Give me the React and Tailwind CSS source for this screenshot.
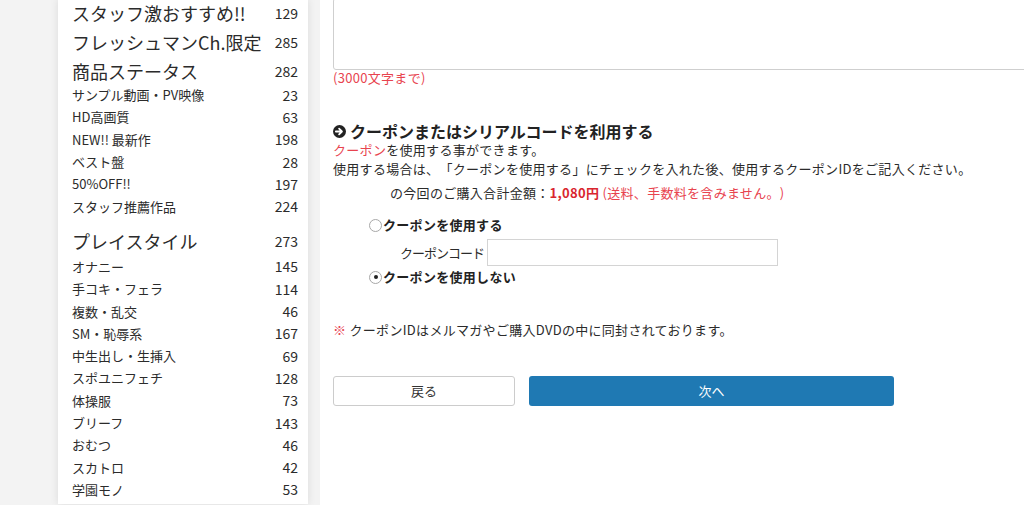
import React from 'react';

const font = { fontFamily: '"Noto Sans CJK JP", "Noto Sans", sans-serif' };

const groups = [
  { type: 'big', label: 'スタッフ激おすすめ!!', count: 129 },
  { type: 'big', label: 'フレッシュマンCh.限定', count: 285 },
  { type: 'big', label: '商品ステータス', count: 282 },
  { type: 'small', label: 'サンプル動画・PV映像', count: 23, first: true },
  { type: 'small', label: 'HD高画質', count: 63 },
  { type: 'small', label: 'NEW!! 最新作', count: 198 },
  { type: 'small', label: 'ベスト盤', count: 28 },
  { type: 'small', label: '50%OFF!!', count: 197 },
  { type: 'small', label: 'スタッフ推薦作品', count: 224 },
  { type: 'big', label: 'プレイスタイル', count: 273, gap: true },
  { type: 'small', label: 'オナニー', count: 145 },
  { type: 'small', label: '手コキ・フェラ', count: 114 },
  { type: 'small', label: '複数・乱交', count: 46 },
  { type: 'small', label: 'SM・恥辱系', count: 167 },
  { type: 'small', label: '中生出し・生挿入', count: 69 },
  { type: 'small', label: 'スポユニフェチ', count: 128 },
  { type: 'small', label: '体操服', count: 73 },
  { type: 'small', label: 'ブリーフ', count: 143 },
  { type: 'small', label: 'おむつ', count: 46 },
  { type: 'small', label: 'スカトロ', count: 42 },
  { type: 'small', label: '学園モノ', count: 53 },
];

const SideRow = ({ item }) => {
  const big = item.type === 'big';
  return (
    <div
      className={`flex items-center justify-between ${big ? 'h-[29px]' : 'h-[22.3px]'} ${item.gap ? 'mt-[9px]' : ''} ${item.first ? '-mt-[2px]' : ''}`}
    >
      <span className={big ? 'text-[18px] leading-none' : 'text-[13px] leading-none'}>{item.label}</span>
      <span className="text-[14px] leading-none">{item.count}</span>
    </div>
  );
};

const Radio = ({ checked }) => (
  <span className="inline-flex items-center justify-center w-[13px] h-[13px] rounded-full border border-[#a8a8a8] bg-white mr-[1px]">
    {checked && <span className="w-[4px] h-[4px] rounded-full bg-[#222]" />}
  </span>
);

const ArrowCircle = () => (
  <svg width="13" height="13" viewBox="0 0 16 16" className="mr-[4px]">
    <circle cx="8" cy="8" r="8" fill="#222" />
    <path d="M3.5 8h7M7.5 4.5 11 8l-3.5 3.5" fill="none" stroke="#fff" strokeWidth="2.2" strokeLinecap="round" strokeLinejoin="round" />
  </svg>
);

export default function App() {
  return (
    <div
      className="flex w-[1024px] h-[505px] overflow-hidden bg-white text-[#2b2b2b] [text-spacing-trim:space-all]"
      style={font}
    >
      <div className="w-[320px] shrink-0 bg-[#f3f3f3] pl-[58px] pr-[12px]">
        <div className="h-full bg-white shadow-[0_0_8px_rgba(0,0,0,0.10)] pl-[14px] pr-[10px]">
          <div className="-mt-[1.5px]">
            {groups.map((g) => (
              <SideRow key={g.label} item={g} />
            ))}
          </div>
        </div>
      </div>

      <div className="flex-1 overflow-hidden pl-[13px] text-[13px] tracking-[0.3px]">
        <div className="w-[720px] h-[72px] -mt-[2px] border border-[#cfcfcf] rounded-[3px] bg-white" />
        <div className="-mt-[1px] text-[#e8444f] leading-[18px]">(3000文字まで)</div>

        <div className="mt-[35px] flex items-center text-[16px] font-bold leading-[18px] text-[#222] tracking-normal">
          <ArrowCircle />
          クーポンまたはシリアルコードを利用する
        </div>
        <div className="leading-[19px]">
          <span className="text-[#e8444f]">クーポン</span>を使用する事ができます。
        </div>
        <div className="leading-[19px]">
          使用する場合は、「クーポンを使用する」にチェックを入れた後、使用するクーポンIDをご記入ください。
        </div>
        <div className="mt-[5px] pl-[57px] leading-[19px]">
          の今回のご購入合計金額：<span className="font-bold text-[#d9262f]">1,080円</span>
          <span className="text-[#e8444f]"> (送料、手数料を含みません。)</span>
        </div>

        <div className="mt-[13px] pl-[36px]">
          <div className="flex items-center h-[20px] font-bold text-[#222]">
            <Radio />
            クーポンを使用する
          </div>
          <div className="flex items-center mt-[4px] pl-[31px]">
            <span className="mr-[3px] tracking-[-1px]">クーポンコード</span>
            <div className="w-[291px] h-[27px] border border-[#d4d4d4] bg-white" />
          </div>
          <div className="flex items-center h-[20px] mt-[1px] font-bold text-[#222]">
            <Radio checked />
            クーポンを使用しない
          </div>
        </div>

        <div className="mt-[33px] leading-[19px]">
          <span className="text-[#e8444f]">※</span> クーポンIDはメルマガやご購入DVDの中に同封されております。
        </div>

        <div className="mt-[37px] flex gap-[14px] tracking-normal">
          <button className="w-[182px] h-[30px] rounded-[3px] border border-[#cccccc] bg-white text-[13px] text-[#333]">
            戻る
          </button>
          <button className="w-[365px] h-[30px] rounded-[3px] bg-[#1f79b3] text-[13px] text-white">
            次へ
          </button>
        </div>
      </div>
    </div>
  );
}
